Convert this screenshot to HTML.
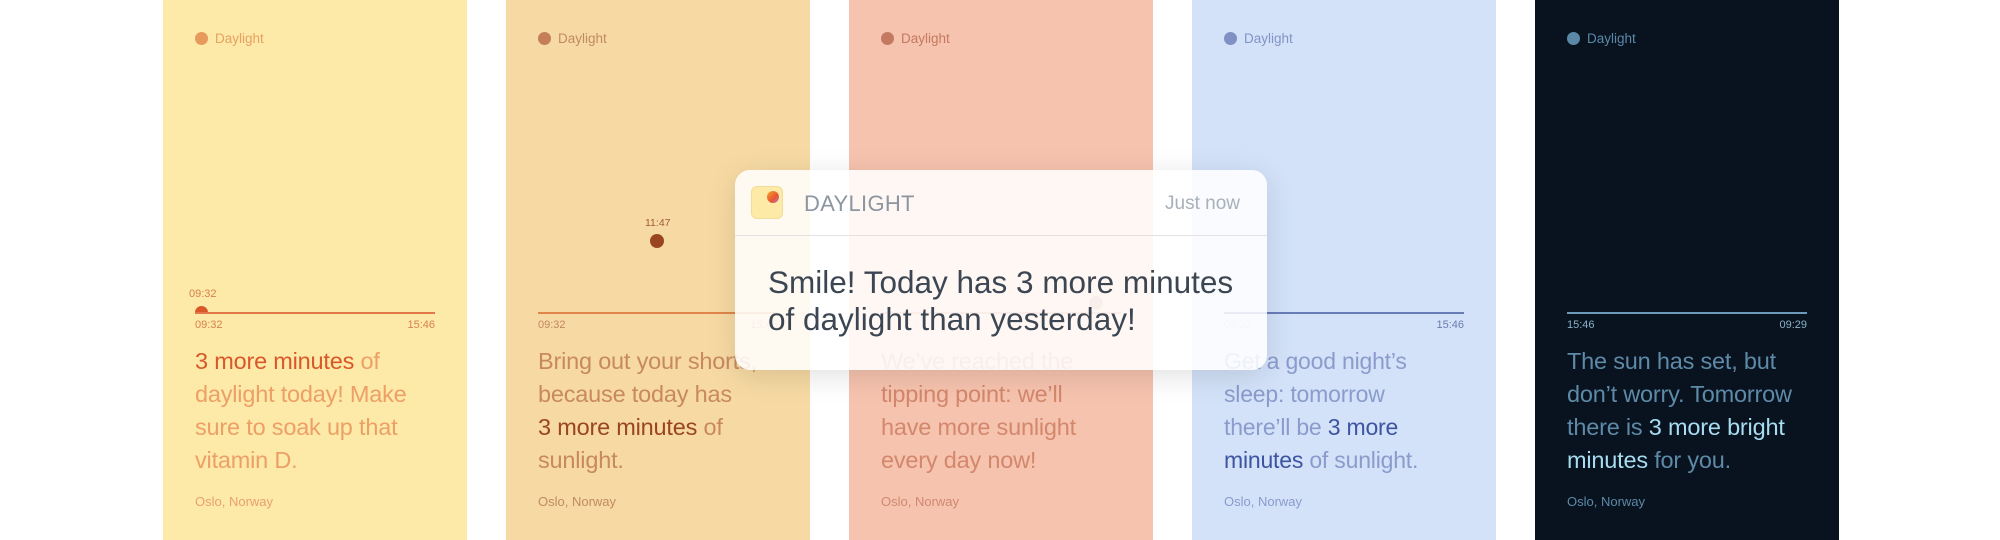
<!DOCTYPE html>
<html><head><meta charset="utf-8"><style>
*{margin:0;padding:0;box-sizing:border-box}
html,body{width:2000px;height:540px;overflow:hidden}
body{background:#fff;position:relative;font-family:"Liberation Sans",sans-serif}
.p{position:absolute;top:0;width:304px;height:540px;overflow:hidden}
.brand{position:absolute;left:32px;top:32px;font-size:13.5px;line-height:14px}
.brand i{position:absolute;left:0;top:0;width:13px;height:13px;border-radius:50%}
.brand span{position:absolute;left:20px;top:0;white-space:nowrap}
.line{position:absolute;left:32px;width:240px;top:312px;height:2px}
.t{position:absolute;top:319px;font-size:11px}
.t.l{left:32px}.t.r{right:32px}
.msg{position:absolute;left:32px;top:345px;white-space:nowrap;font-size:23.5px;line-height:33px;letter-spacing:-0.2px}
.loc{position:absolute;left:32px;top:494px;font-size:13px}
.n{position:absolute;left:735px;top:170px;width:532px;height:200px;border-radius:15px;background:rgba(255,255,255,0.86);box-shadow:0 6px 30px rgba(0,0,0,0.12)}
</style></head><body>

<div class="p" style="left:163px;background:#fde9a8">
 <div class="brand" style="color:#e8a060"><i style="background:#e89a5c"></i><span>Daylight</span></div>
 <div style="position:absolute;left:26px;top:288px;font-size:11px;color:#d58050">09:32</div>
 <div style="position:absolute;left:32px;top:306px;width:13px;height:7px;border-radius:7px 7px 0 0;background:#d9582a"></div>
 <div class="line" style="background:#e0784a"></div>
 <div class="t l" style="color:#d58050">09:32</div><div class="t r" style="color:#d58050">15:46</div>
 <div class="msg" style="color:#eda066"><span style="color:#d9582a">3 more minutes</span> of<br>daylight today! Make<br>sure to soak up that<br>vitamin D.</div>
 <div class="loc" style="color:#e8a070">Oslo, Norway</div>
</div>

<div class="p" style="left:506px;background:#f7daa3">
 <div class="brand" style="color:#c08a60"><i style="background:#c47f58"></i><span>Daylight</span></div>
 <div style="position:absolute;left:139px;top:217px;font-size:10.5px;color:#a05a35">11:47</div>
 <div style="position:absolute;left:144px;top:234px;width:14px;height:14px;border-radius:50%;background:#9a4521"></div>
 <div class="line" style="background:#e0864a"></div>
 <div class="t l" style="color:#c08660">09:32</div><div class="t r" style="color:#c08660">15:46</div>
 <div class="msg" style="color:#c8895e">Bring out your shorts,<br>because today has<br><span style="color:#9a4521">3 more minutes</span> of<br>sunlight.</div>
 <div class="loc" style="color:#c08a60">Oslo, Norway</div>
</div>

<div class="p" style="left:849px;background:#f6c3ae">
 <div class="brand" style="color:#c47a60"><i style="background:#c47a60"></i><span>Daylight</span></div>
 <div style="position:absolute;left:240px;top:296px;width:14px;height:14px;border-radius:50%;background:#d8866a"></div>
 <div class="line" style="background:#d8866a"></div>
 <div class="msg" style="color:#d3876c">We’ve reached the<br>tipping point: we’ll<br>have more sunlight<br>every day now!</div>
 <div class="loc" style="color:#d08870">Oslo, Norway</div>
</div>

<div class="p" style="left:1192px;background:#d3e2f9">
 <div class="brand" style="color:#8393c4"><i style="background:#8090c4"></i><span>Daylight</span></div>
 <div class="line" style="background:#6a7cb8"></div>
 <div class="t l" style="color:#aebbe0">09:32</div><div class="t r" style="color:#6a7cb0">15:46</div>
 <div class="msg" style="color:#8a9bcc;font-size:23px;letter-spacing:-0.2px">Get a good night’s<br>sleep: tomorrow<br>there’ll be <span style="color:#3d54a0">3 more</span><br><span style="color:#3d54a0">minutes</span> of sunlight.</div>
 <div class="loc" style="color:#8a9bcc">Oslo, Norway</div>
</div>

<div class="p" style="left:1535px;background:#08131f">
 <div class="brand" style="color:#5c88a8"><i style="background:#5c88a8"></i><span>Daylight</span></div>
 <div class="line" style="background:#6a9ab8"></div>
 <div class="t l" style="color:#8ab0c8">15:46</div><div class="t r" style="color:#8ab0c8">09:29</div>
 <div class="msg" style="color:#5e8aa8">The sun has set, but<br>don’t worry. Tomorrow<br>there is <span style="color:#a8dcf0">3 more bright</span><br><span style="color:#a8dcf0">minutes</span> for you.</div>
 <div class="loc" style="color:#5e8aa8">Oslo, Norway</div>
</div>

<div class="n">
 <div style="position:absolute;left:16px;top:16px;width:32px;height:33px;border-radius:6px;background:#fdeaa6;border:1px solid #f3dc98"></div>
 <div style="position:absolute;left:32px;top:21px;width:12px;height:12px;border-radius:50%;background:linear-gradient(135deg,#f7a12a,#e8552f 60%,#b07ad0)"></div>
 <div style="position:absolute;left:69px;top:21px;font-size:22px;color:#8c95a0;letter-spacing:0.3px">DAYLIGHT</div>
 <div style="position:absolute;right:27px;top:23px;font-size:19px;color:#a8b0ba">Just now</div>
 <div style="position:absolute;left:0;right:0;top:65px;height:1px;background:#e4e2e0"></div>
 <div style="position:absolute;left:33px;top:94px;font-size:31.5px;line-height:37px;color:#3c4652;white-space:nowrap">Smile! Today has 3 more minutes<br>of daylight than yesterday!</div>
</div>
</body></html>
